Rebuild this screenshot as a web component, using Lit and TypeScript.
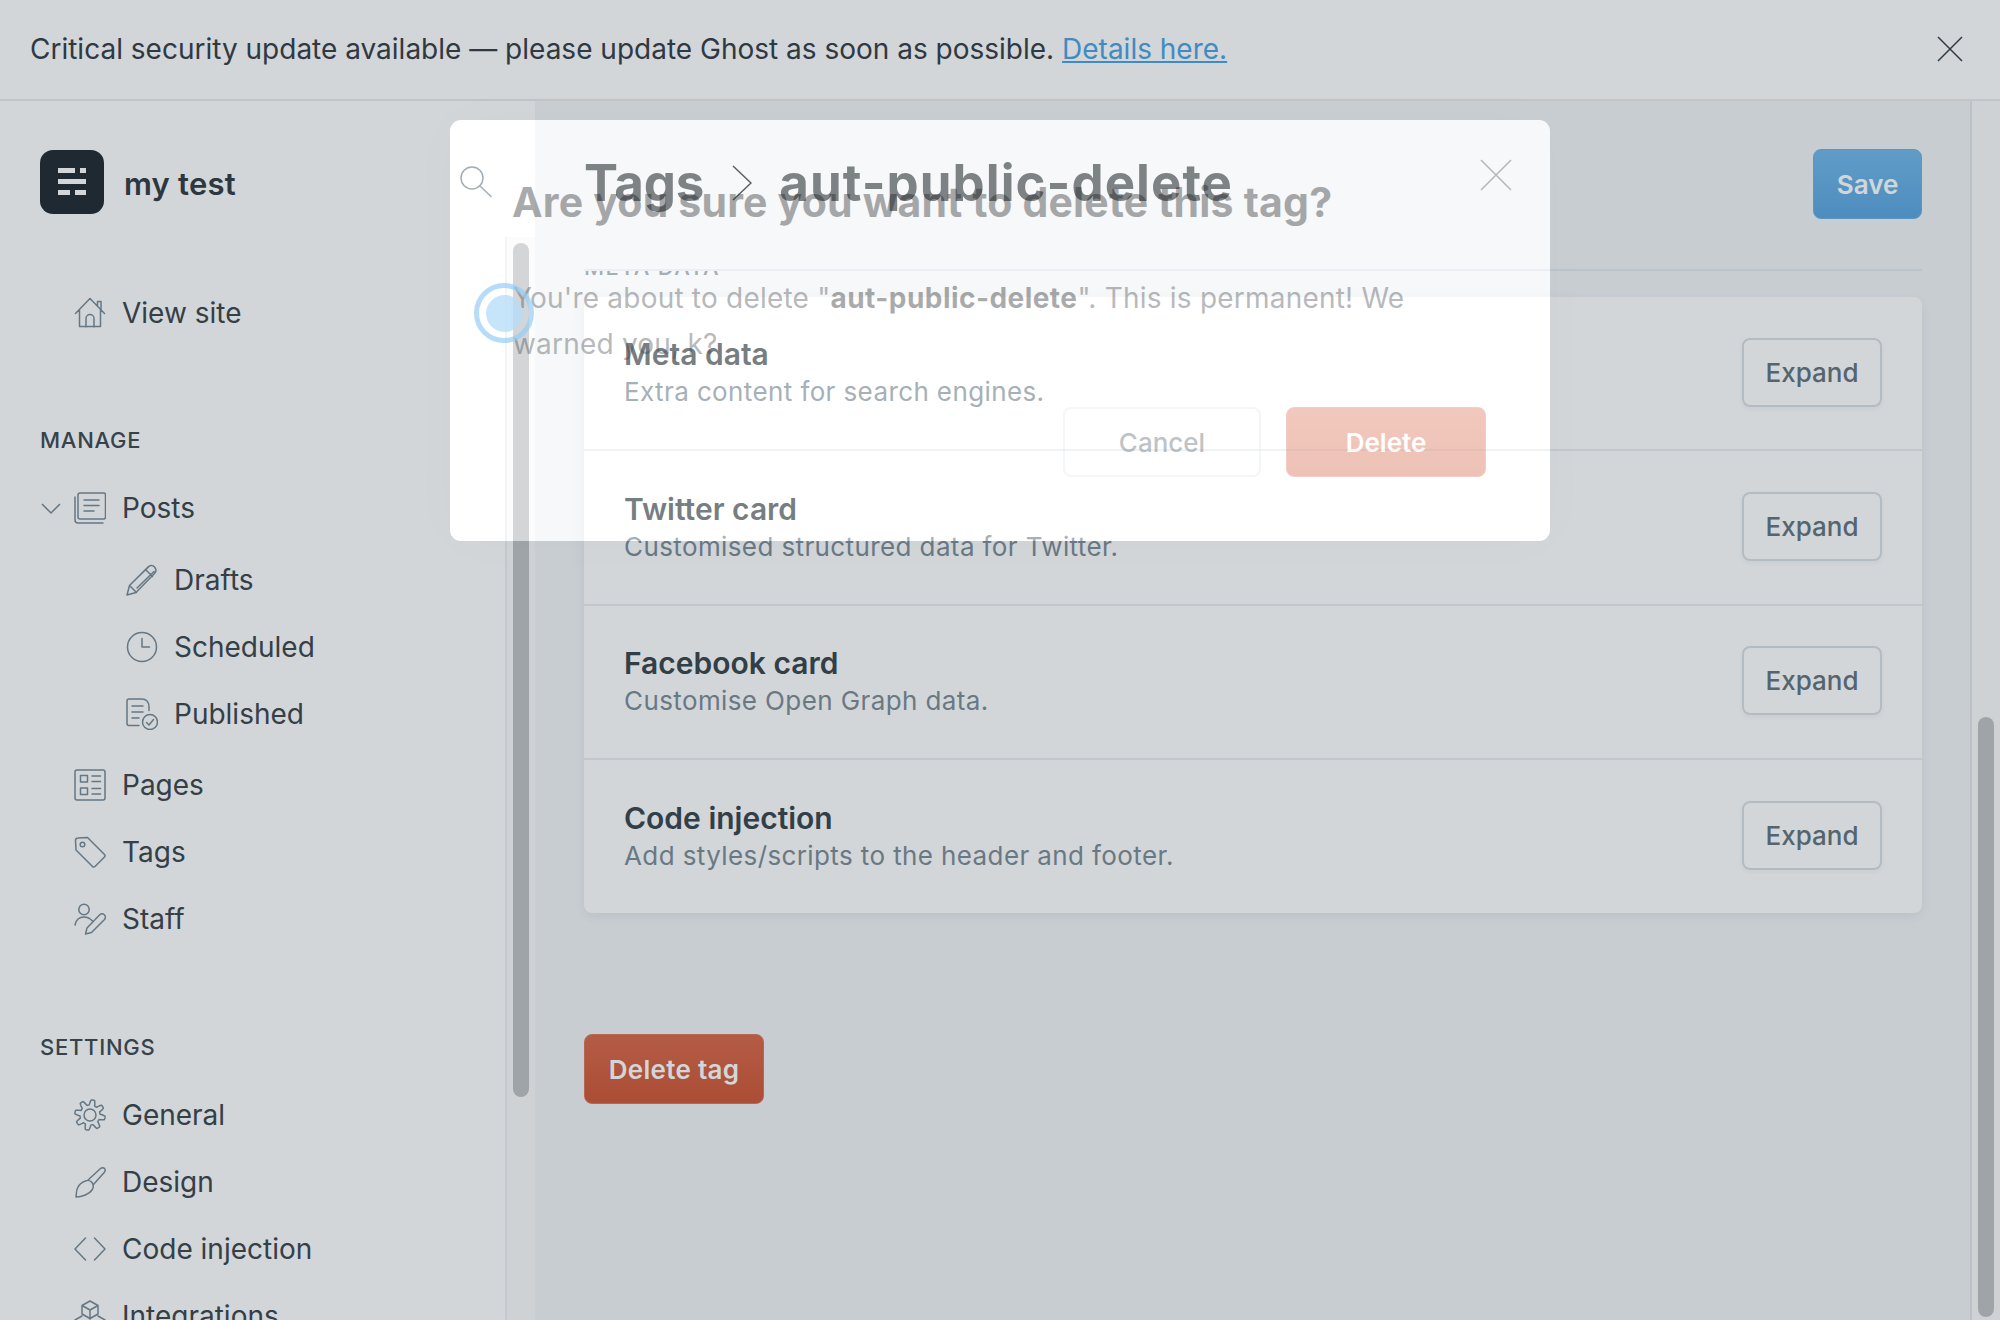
import { LitElement, html, css, svg } from "lit";
import { customElement } from "lit/decorators.js";

const cog = (() => {
  const pts: string[] = [];
  for (let i = 0; i <= 160; i++) {
    const a = (i / 160) * Math.PI * 2 + Math.PI / 8;
    const s = Math.sin(a * 8);
    const r = 12.6 + 2.6 * Math.max(-1, Math.min(1, s * 1.6));
    pts.push(`${(16 + r * Math.cos(a)).toFixed(2)} ${(16 + r * Math.sin(a)).toFixed(2)}`);
  }
  return "M" + pts.join("L") + "Z";
})();

const icons: Record<string, unknown> = {
  home: svg`<path d="M1.5 16.5 16 1.5l14.5 15M23.5 9V4.5h3.5v8M5.5 13v16.500h21V13M12 30v-8.500a4 4 0 0 1 8 0V30"/>`,
  posts: svg`<rect x="4" y="1" width="27.500" height="26" rx="2"/><path d="M1 5v23a3 3 0 0 0 3 3h25M10 8h15M10 13.500h15M10 19h10"/>`,
  pencil: svg`<path d="M1 31l2.500-9.500L22 3c2-2 5-1.800 6.500 0s2 4.500 0 6.500L10 28.500zM3.500 21.500l7 7M19.500 5.500l7 7M7 18 23 2.500M11 24 28 7.500"/>`,
  clock: svg`<circle cx="16" cy="16" r="14.500"/><path d="M16 7.500V16h7.500"/>`,
  published: svg`<path d="M13 27.500H3a2 2 0 0 1-2-2V3a2 2 0 0 1 2-2h13c4 0 7 3 7 7.500v4"/><path d="M6 8h11M6 14h11M6 20h7"/><circle cx="24" cy="24" r="7.500"/><path d="M20.500 24.500l2.500 2.500 4.500-5.500"/>`,
  pages: svg`<rect x="1" y="1" width="30" height="30" rx="2"/><rect x="6.500" y="6.500" width="7" height="6.500"/><rect x="6.500" y="19" width="7" height="6.500"/><path d="M18 7h8.500M18 12.500h8.500M18 19.500h8.500M18 25h8.500"/>`,
  tag: svg`<path d="M1.500 4.500c0-1.500 1-2.500 2.500-2.500l9.500-.5 17 17c.8.800.8 1.800 0 2.500L21 30.500c-.8.800-1.800.8-2.500 0L2 14z"/><circle cx="8.500" cy="8.500" r="2.300"/>`,
  staff: svg`<circle cx="10" cy="6.500" r="5.200"/><path d="M1 22c1-5 4.500-8 9-8 3.500 0 6 1.300 8.500 4"/><path d="M11.500 31l1.500-6L25.500 12c1.500-1.500 3.500-1.300 4.800-.2s1.500 3.200.2 4.700L17.500 29.500z"/>`,
  gear: svg`<path d="${cog}"/><circle cx="16" cy="16" r="6"/>`,
  brush: svg`<path d="M14 14 26.500 2.500c1.500-1.300 3.200-1 4 0s.8 2.800-.3 4L19 19M11.500 15c2-1 5-.5 6.500 1.500 1.500 2 2 4.500 0 7.500-2.500 4-10 7-16 7 .5-2 0-6 1.500-9 1.500-3.500 5-6 8-7z"/>`,
  code: svg`<path d="M11.500 5 1 16l10.500 11M20.500 5 31 16 20.500 27"/>`,
  integrations: svg`<path d="M16 1l8 4.500v8.500l-8 4.500-8-4.500V5.500zM8 5.500l8 4.500 8-4.500M16 10v8.500M8 16l-7 4v8l7 4 8-4v-8M24 16l7 4v8l-7 4-8-4"/>`,
  search: svg`<circle cx="12" cy="12" r="11"/><path d="M20 20l11 10.500"/>`,
};

const ic = (n: string) => html`<svg class="ic" viewBox="0 0 32 32">${icons[n]}</svg>`;

const manage = [
  { n: "posts", t: "Posts", chev: true },
  { n: "pencil", t: "Drafts", sub: true },
  { n: "clock", t: "Scheduled", sub: true },
  { n: "published", t: "Published", sub: true },
  { n: "pages", t: "Pages" },
  { n: "tag", t: "Tags" },
  { n: "staff", t: "Staff" },
];
const settings = [
  { n: "gear", t: "General" },
  { n: "brush", t: "Design" },
  { n: "code", t: "Code injection" },
  { n: "integrations", t: "Integrations" },
];
const cards = [
  ["Meta data", "Extra content for search engines."],
  ["Twitter card", "Customised structured data for Twitter."],
  ["Facebook card", "Customise Open Graph data."],
  ["Code injection", "Add styles/scripts to the header and footer."],
];

@customElement("app-root")
export class AppRoot extends LitElement {
  static styles = css`
    :host { display: block; position: relative; width: 2000px; height: 1320px; overflow: hidden; font-family: Inter, "Noto Sans", sans-serif; color: #3f474c; background: #fff; }
    * { box-sizing: border-box; }
    .banner { height: 101px; border-bottom: 2px solid #e9ebed; background: #fff; display: flex; align-items: center; justify-content: space-between; padding: 0 37px 1px 30px; font-size: 28px; letter-spacing: 0; color: #394047; }
    .banner a { color: #4ea4e4; text-decoration: underline; }
    .x { display: block; fill: none; stroke-width: 1.500; }
    .banner .x { width: 26px; height: 26px; stroke: #394047; }
    .body { display: flex; height: 1219px; }
    .side { width: 535px; display: flex; flex: none; background: #fff; }
    .nav { width: 505px; flex: none; padding: 49px 13px 0 40px; }
    .track { flex: 1; margin-top: 136px; border-left: 2px solid #edf0f2; padding: 6px 7px 0 6px; background: #fbfbfb; border-right: 1px solid #f0f0f0; }
    .thumb { width: 16px; background: #c1c3c5; border-radius: 8px; }
    .side .thumb { height: 854px; }
    .brand { display: flex; align-items: center; height: 64px; gap: 20px; font-weight: 600; font-size: 31px; letter-spacing: 0.200px; color: #353e44; }
    .logo { width: 64px; height: 64px; border-radius: 13px; background: #252d34; flex: none; display: block; }
    .brand span { flex: 1; padding-top: 2px; }
    .srch { width: 32px; height: 32px; margin: 0; }
    .ic { width: 32px; height: 32px; flex: none; display: block; fill: none; stroke: #7a8c98; stroke-width: 1.500; stroke-linejoin: round; stroke-linecap: round; }
    .row { height: 67px; display: flex; align-items: center; gap: 16px; padding-left: 34px; font-size: 28px; letter-spacing: 0; position: relative; white-space: nowrap; }
    .row.sub { padding-left: 86px; }
    .view { margin-top: 65px; }
    .chev { width: 20px; height: 12px; position: absolute; left: 1px; top: 29px; fill: none; stroke: #7a8c98; stroke-width: 1.500; }
    h4 { margin: 0; font-weight: 500; font-size: 22px; line-height: 26px; letter-spacing: 0.750px; color: #434c52; }
    .manage { margin-top: 81px; margin-bottom: 21px; }
    .settings { margin-top: 82px; margin-bottom: 21px; }
    .gap { margin-top: 5px; }
    .gap2 { margin-top: 4px; }
    .main { flex: 1; display: flex; background: #f3f5f7; min-width: 0; }
    .content { width: 1435px; flex: none; padding: 0 48px 0 49px; }
    .head { height: 170px; border-bottom: 2px solid #e3e9ee; display: flex; align-items: center; justify-content: space-between; padding-bottom: 3px; }
    h1 { margin: -2px 0 0; display: flex; align-items: center; font-size: 51px; font-weight: 700; color: #454c50; line-height: 60px; }
    h1 span:first-child { letter-spacing: -0.100px; }
    h1 span:last-child { letter-spacing: 1.050px; }
    h1 svg { width: 20px; height: 36px; margin: 0 27px 0 28px; fill: none; stroke: #15171a; stroke-width: 1.500; }
    .btn { display: flex; align-items: center; justify-content: center; border-radius: 8px; font-size: 26px; font-weight: 500; height: 70px; }
    .save { width: 109px; padding-top: 2px; color: #fff; font-weight: 600; background: linear-gradient(#76b9ea, #5da6df); border: 1px solid #6fb1e6; }
    .clip { height: 26px; overflow: hidden; }
    .clip div { margin-top: -15px; font-size: 22px; line-height: 22px; font-weight: 500; letter-spacing: 1.300px; color: #7f8b93; }
    .card { background: #fff; border-radius: 8px; box-shadow: 0 4px 14px rgba(30, 50, 70, 0.07); }
    .crow { height: 154.400px; border-bottom: 2px solid #e9eef2; display: flex; align-items: center; justify-content: space-between; padding: 0 40px; }
    .crow:last-child { height: 153px; border-bottom: 0; }
    .ct { font-size: 30px; font-weight: 600; line-height: 36px; color: #3c474d; }
    .cs { font-size: 26px; line-height: 36px; letter-spacing: 0.390px; color: #7f8e98; margin-top: 2px; }
    .expand { width: 140px; height: 69px; margin-top: -2px; border: 2px solid #d9e0e5; color: #67747c; box-shadow: 0 2px 4px rgba(30, 50, 70, 0.05); }
    .del { width: 180px; height: 70px; margin-top: 121px; color: #fff; font-weight: 600; letter-spacing: 0.300px; background: linear-gradient(#db6a4c, #d15837); border: 1px solid #e0775a; }
    .rtrack { flex: 1; padding: 616px 6px 0 6px; border-left: 2px solid #e4e7ea; background: #fafafa; }
    .rtrack .thumb { height: 600px; }
    .modal { position: absolute; left: 450px; top: 120px; width: 1100px; height: 421px; border-radius: 11px; background: rgba(255, 255, 255, 0.3); box-shadow: 0 0 0 3000px rgba(5, 28, 44, 0.18), 0 0 60px rgba(0, 0, 0, 0.02); }
    .mc { opacity: 0.36; height: 100%; padding: 57px 64px 64px 62px; display: flex; flex-direction: column; position: relative; }
    .mt { margin: 0; font-size: 41px; font-weight: 700; line-height: 50px; letter-spacing: 0.190px; color: #15171a; }
    .mb { margin: 48px 0 0 1px; font-size: 28px; line-height: 46px; letter-spacing: 0.210px; color: #394047; }
    .mb b { font-weight: 700; letter-spacing: 0.450px; color: #15171a; }
    .acts { display: flex; justify-content: flex-end; gap: 25px; margin-top: 40px; }
    .acts .btn { width: 200px; height: 70px; }
    .acts .cancel { width: 198px; border: 2px solid #e1e7ec; color: #4f5b63; }
    .confirm { color: #fff; font-weight: 600; background: linear-gradient(#dc6a4c, #d15837); border: 1px solid #e0775a; }
    .mx { position: absolute; right: 38px; top: 39px; width: 32px; height: 32px; stroke: #3d464c; }
    .cursor { position: absolute; left: 474px; top: 283px; width: 60px; height: 60px; border-radius: 50%; border: 5px solid rgba(150, 205, 245, 0.7); display: flex; align-items: center; justify-content: center; }
    .cursor span { width: 37px; height: 37px; border-radius: 50%; background: rgba(180, 220, 248, 0.75); }
  `;

  row(r: { n: string; t: string; sub?: boolean; chev?: boolean }) {
    return html`<div class="row ${r.sub ? "sub" : ""}">
      ${r.chev ? html`<svg class="chev" viewBox="0 0 20 12"><path d="M1 1l9 9 9-9"/></svg>` : ""}
      ${ic(r.n)}<span>${r.t}</span>
    </div>`;
  }

  render() {
    return html`
      <div class="banner">
        <div>Critical security update available — please update Ghost as soon as possible. <a>Details here.</a></div>
        <svg class="x" viewBox="0 0 26 26"><path d="M1 1l24 24M25 1 1 25"/></svg>
      </div>
      <div class="body">
        <aside class="side">
          <div class="nav">
            <div class="brand">
              <svg class="logo" viewBox="0 0 64 64" fill="#fff">
                <rect x="18" y="18" width="17" height="5"/><rect x="40" y="18" width="6" height="5"/>
                <rect x="18" y="29" width="28" height="5"/>
                <rect x="18" y="40" width="12" height="5"/><rect x="35" y="40" width="11" height="5"/>
              </svg>
              <span>my test</span>
              <svg class="ic srch" viewBox="0 0 32 32">${icons.search}</svg>
            </div>
            <div class="view">${this.row({ n: "home", t: "View site" })}</div>
            <h4 class="manage">MANAGE</h4>
            ${manage.map((r, i) => html`<div class="${i === 1 ? "gap" : i === 4 ? "gap2" : ""}">${this.row(r)}</div>`)}
            <h4 class="settings">SETTINGS</h4>
            ${settings.map((r) => this.row(r))}
          </div>
          <div class="track"><div class="thumb"></div></div>
        </aside>
        <main class="main">
          <div class="content">
            <div class="head">
              <h1><span>Tags</span><svg viewBox="0 0 20 36"><path d="M1 1l18 17L1 35"/></svg><span>aut-public-delete</span></h1>
              <div class="btn save">Save</div>
            </div>
            <div class="clip"><div>META DATA</div></div>
            <div class="card">
              ${cards.map(
                ([t, s]) => html`<div class="crow">
                  <div><div class="ct">${t}</div><div class="cs">${s}</div></div>
                  <div class="btn expand">Expand</div>
                </div>`
              )}
            </div>
            <div class="btn del">Delete tag</div>
          </div>
          <div class="rtrack"><div class="thumb"></div></div>
        </main>
      </div>
      <div class="modal">
        <div class="mc">
          <svg class="x mx" viewBox="0 0 32 32"><path d="M1 1l30 30M31 1 1 31"/></svg>
          <h2 class="mt">Are you sure you want to delete this tag?</h2>
          <p class="mb">You're about to delete "<b>aut-public-delete</b>". This is permanent! We warned you, k?</p>
          <div class="acts">
            <div class="btn cancel">Cancel</div>
            <div class="btn confirm">Delete</div>
          </div>
        </div>
      </div>
      <div class="cursor"><span></span></div>
    `;
  }
}
